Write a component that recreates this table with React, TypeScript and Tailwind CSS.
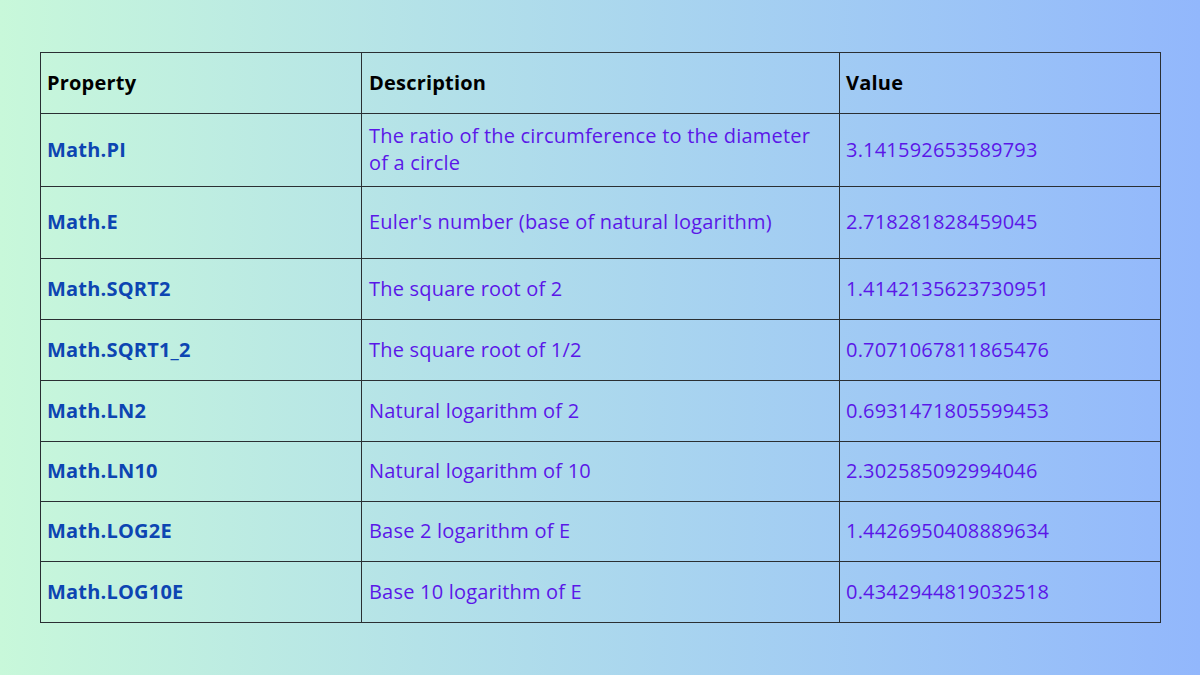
const rows: { name: string; desc: string; value: string; h: string }[] = [
  { name: "Math.PI", desc: "The ratio of the circumference to the diameter of a circle", value: "3.141592653589793", h: "h-[73px]" },
  { name: "Math.E", desc: "Euler's number (base of natural logarithm)", value: "2.718281828459045", h: "h-[72px]" },
  { name: "Math.SQRT2", desc: "The square root of 2", value: "1.4142135623730951", h: "h-[61px]" },
  { name: "Math.SQRT1_2", desc: "The square root of 1/2", value: "0.7071067811865476", h: "h-[61px]" },
  { name: "Math.LN2", desc: "Natural logarithm of 2", value: "0.6931471805599453", h: "h-[61px]" },
  { name: "Math.LN10", desc: "Natural logarithm of 10", value: "2.302585092994046", h: "h-[60px]" },
  { name: "Math.LOG2E", desc: "Base 2 logarithm of E", value: "1.4426950408889634", h: "h-[60px]" },
  { name: "Math.LOG10E", desc: "Base 10 logarithm of E", value: "0.4342944819032518", h: "h-[61px]" },
];

export default function App() {
  return (
    <main
      className="w-[1200px] h-[675px] bg-gradient-to-r from-[#c8f8da] to-[#92b7fc] pt-[52px] px-[40px]"
      style={{ fontFamily: '"Open Sans", "Noto Sans", sans-serif' }}
    >
      <table className="w-[1120px] border-collapse border border-[#2a2f33] table-fixed text-[20px] leading-[27px] tracking-[0.2px]">
        <colgroup>
          <col className="w-[321px]" />
          <col className="w-[478px]" />
          <col className="w-[321px]" />
        </colgroup>
        <thead>
          <tr className="h-[61px] text-left text-black">
            <th className="border border-[#2a2f33] px-[6px] pb-[2px] font-bold">Property</th>
            <th className="border border-[#2a2f33] px-[7px] pb-[2px] font-bold">Description</th>
            <th className="border border-[#2a2f33] px-[6px] pb-[2px] font-bold">Value</th>
          </tr>
        </thead>
        <tbody>
          {rows.map((r) => (
            <tr key={r.name} className={r.h}>
              <td className="border border-[#2a2f33] px-[6px] pb-[2px] font-bold text-[#0d45b2]">{r.name}</td>
              <td className="border border-[#2a2f33] px-[7px] pb-[2px] text-[#5b17e8]">{r.desc}</td>
              <td className="border border-[#2a2f33] px-[6px] pb-[2px] text-[#5b17e8]">{r.value}</td>
            </tr>
          ))}
        </tbody>
      </table>
    </main>
  );
}
